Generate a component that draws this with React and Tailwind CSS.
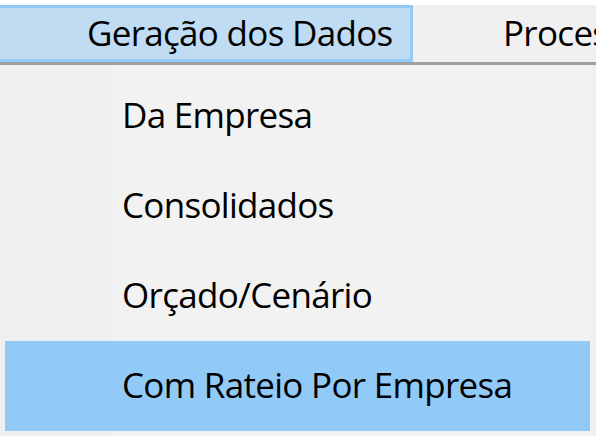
// Menu bar with "Geração dos Dados" open (zoomed Windows menu)

const items = ['Da Empresa', 'Consolidados', 'Orçado/Cenário', 'Com Rateio Por Empresa']

function App() {
    const hovered = 3

    return (
        <div className="w-[596px] h-[436px] overflow-hidden bg-white text-black font-['Segoe_UI','Open_Sans',sans-serif] text-[35px] tracking-[-0.7px] leading-none">

            {/* top white strip */}
            <div className="h-[5px]"></div>

            {/* menu bar */}
            <div className="h-[57px] flex bg-[#f0f0f0] whitespace-nowrap">
                <div className="w-[413px] shrink-0 flex items-center pl-[87px] pb-[2px] bg-[#c0dcf3] border-t-[3px] border-r-[3px] border-b-[3px] border-[#91c9f7]">
                    Geração dos Dados
                </div>
                <div className="flex items-center pl-[90px] pb-[2px]">Processamento</div>
            </div>

            {/* dropdown */}
            <div className="h-[374px] border-t-[3px] border-[#a0a0a0] pt-[6px] bg-[linear-gradient(to_right,#f0f0f0_113px,#f2f2f2_113px,#f2f2f2_590px,#f0f0f0_590px)]">
                {items.map((label, i) => (
                    <div key={label}
                        className={`h-[90px] ml-[5px] w-[585px] flex items-center pl-[117px] pb-[4px] whitespace-nowrap ${
                            i === hovered ? 'bg-[#91c9f7]' : ''
                        }`}>
                        {label}
                    </div>
                ))}
            </div>

        </div>
    )
}

export default App
